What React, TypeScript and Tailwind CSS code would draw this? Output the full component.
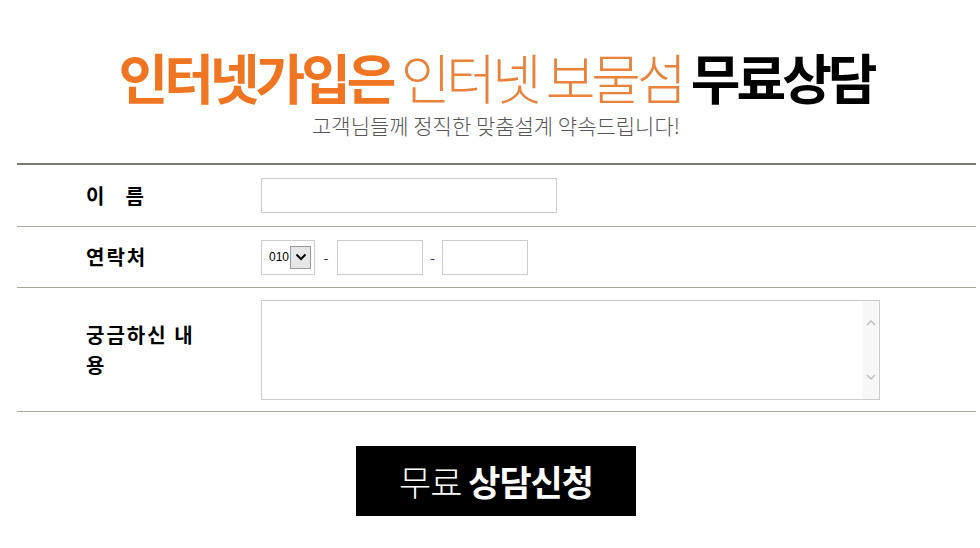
import React from 'react';

const font = { fontFamily: '"Noto Sans CJK KR", "Noto Sans", sans-serif' };

const Divider: React.FC<{ thick?: boolean }> = ({ thick }) => (
  <div className={thick ? 'h-[2px] bg-[#7a776c]' : 'h-px bg-[#aaa89c]'} />
);

const App: React.FC = () => {
  return (
    <div className="w-[980px] h-[548px] bg-white overflow-hidden font-['Noto_Sans_CJK_KR',sans-serif]">
      {/* Title */}
      <div className="flex flex-col items-center pt-[45px] pl-[12px]">
        <h1 className="text-[54px] leading-[64px] tracking-[-4px] whitespace-nowrap">
          <span className="font-bold text-[#f07522]">인터넷가입은</span>{' '}
          <span className="font-light text-[#e9823c]">인터넷 보물섬</span>{' '}
          <span className="font-bold text-black">무료상담</span>
        </h1>
        <p className="mt-[3px] text-[21px] leading-[26px] tracking-[0px] text-[#555] font-light">
          고객님들께 정직한 맞춤설계 약속드립니다!
        </p>
      </div>

      {/* Form */}
      <div className="ml-[17px] w-[959px] mt-[25px]">
        <Divider thick />
        <div className="flex items-center h-[61px]">
          <div className="w-[244px] pl-[69px] text-[20px] tracking-[2px] font-bold text-black">
            <span>이</span>
            <span className="ml-[19px]">름</span>
          </div>
          <input className="w-[296px] h-[35px] border border-[#ccc] outline-none" />
        </div>
        <Divider />
        <div className="flex items-center h-[60px]">
          <div className="w-[244px] pl-[69px] text-[20px] tracking-[2px] font-bold text-black">연락처</div>
          <div className="flex items-center">
            <div className="w-[54px] h-[35px] border border-[#ccc] flex items-center pl-[7px] gap-[1px]">
              <span className="text-[12px] text-black" style={{ fontFamily: '"Liberation Sans", Arial, sans-serif' }}>010</span>
              <span className="w-[21px] h-[23px] bg-[#e6e6e6] border border-[#999] flex items-center justify-center">
                <svg width="12" height="8" viewBox="0 0 12 8">
                  <path d="M1.5 1.5 L6 6 L10.5 1.5" stroke="#000" strokeWidth="2" fill="none" />
                </svg>
              </span>
            </div>
            <span className="w-[22px] text-center text-[14px] text-[#333]">-</span>
            <input className="w-[86px] h-[35px] border border-[#ccc] outline-none" />
            <span className="w-[19px] text-center text-[14px] text-[#333]">-</span>
            <input className="w-[86px] h-[35px] border border-[#ccc] outline-none" />
          </div>
        </div>
        <Divider />
        <div className="flex items-center h-[123px]">
          <div className="w-[244px] pl-[69px]">
            <div className="w-[118px] text-[20px] tracking-[2px] leading-[30px] font-bold text-black">
              궁금하신 내용
            </div>
          </div>
          <div className="w-[619px] h-[100px] border border-[#ccc] flex">
            <div className="flex-1" />
            <div className="w-[17px] bg-[#f7f7f7] flex flex-col items-center justify-between py-[19px]">
              <svg width="10" height="6" viewBox="0 0 10 6">
                <path d="M1 5 L5 1 L9 5" stroke="#bbb" strokeWidth="1.3" fill="none" />
              </svg>
              <svg width="10" height="6" viewBox="0 0 10 6">
                <path d="M1 1 L5 5 L9 1" stroke="#bbb" strokeWidth="1.3" fill="none" />
              </svg>
            </div>
          </div>
        </div>
        <Divider />
      </div>

      {/* Button */}
      <div className="flex justify-center mt-[34px]">
        <button className="w-[280px] h-[70px] bg-black text-white text-[35px] tracking-[-1px] ml-[12px]" style={font}>
          <span className="font-light">무료</span> <span className="font-bold">상담신청</span>
        </button>
      </div>
    </div>
  );
};

export default App;
